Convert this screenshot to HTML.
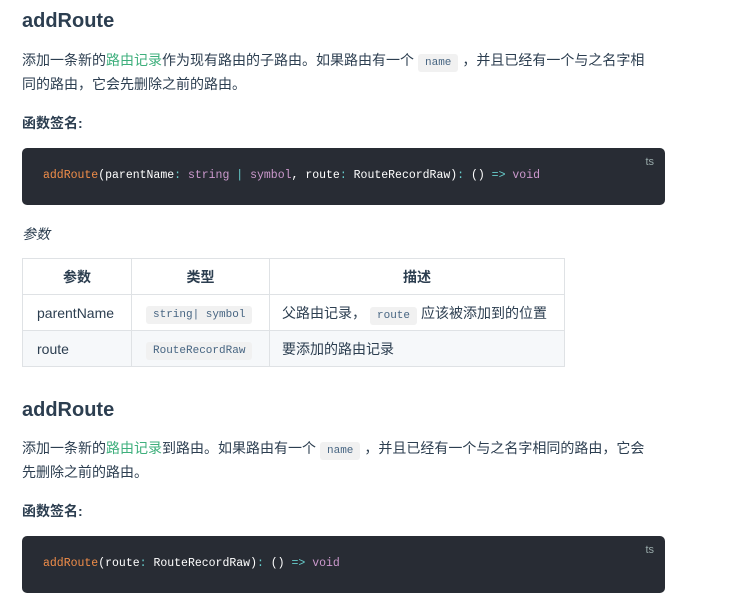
<!DOCTYPE html>
<html><head><meta charset="utf-8"><style>
body{margin:0;background:#fff;width:732px;height:606px;overflow:hidden;font-family:"Liberation Sans","Noto Sans CJK SC",sans-serif;color:#2c3e50;}
.a{position:absolute;left:22px;white-space:nowrap}
h2{margin:0;font-size:20px;font-weight:600;color:#2c3e50}
p{margin:0;font-size:14px;line-height:24px;color:#2c3e50}
.g{color:#3eaf7c}
.ic{font-family:"Liberation Mono",monospace;font-size:11px;background:#f1f1f1;color:#476582;padding:3px 7px;border-radius:3px;margin:0 4px}
.b{font-size:14px;font-weight:bold}
.code{position:absolute;left:22px;width:643px;height:57px;background:#282c34;border-radius:5px;font-family:"Liberation Mono",monospace;font-size:11.5px;color:#fff}
.code .t{position:absolute;left:21px;top:21px;white-space:pre}
.code .l{position:absolute;right:11px;top:8px;font-size:11px;color:#9aa;font-family:"Liberation Sans",sans-serif}
.o{color:#f08d49}.p{color:#cc99cd}.c{color:#67cdcc}
table{position:absolute;left:22px;top:258px;border-collapse:collapse;font-size:14px;color:#2c3e50;white-space:nowrap}
td,th{border:1px solid #dfe2e5;height:35px;padding:0 14px}
th{font-weight:bold;text-align:center}
tr.s{background:#f6f8fa}
</style></head><body>
<h2 class="a" style="top:10px">addRoute</h2>
<p class="a" style="top:48px">添加一条新的<span class="g">路由记录</span>作为现有路由的子路由。如果路由有一个<span class="ic">name</span>，并且已经有一个与之名字相</p>
<p class="a" style="top:72px">同的路由，它会先删除之前的路由。</p>
<div class="a b" style="top:113px">函数签名:</div>
<div class="code" style="top:148px"><span class="l">ts</span><div class="t"><span class="o">addRoute</span>(parentName<span class="c">:</span> <span class="p">string</span> <span class="c">|</span> <span class="p">symbol</span>, route<span class="c">:</span> RouteRecordRaw)<span class="c">:</span> () <span class="c">=&gt;</span> <span class="p">void</span></div></div>
<div class="a" style="top:224px;font-size:14px;font-style:italic">参数</div>
<table>
<tr><th style="width:80px">参数</th><th style="width:109px">类型</th><th style="width:266px">描述</th></tr>
<tr><td>parentName</td><td><span class="ic" style="margin:0">string| symbol</span></td><td style="padding:0 12px">父路由记录，<span class="ic">route</span>应该被添加到的位置</td></tr>
<tr class="s"><td>route</td><td><span class="ic" style="margin:0">RouteRecordRaw</span></td><td style="padding:0 12px">要添加的路由记录</td></tr>
</table>
<h2 class="a" style="top:399px">addRoute</h2>
<p class="a" style="top:436px">添加一条新的<span class="g">路由记录</span>到路由。如果路由有一个<span class="ic">name</span>，并且已经有一个与之名字相同的路由，它会</p>
<p class="a" style="top:460px">先删除之前的路由。</p>
<div class="a b" style="top:501px">函数签名:</div>
<div class="code" style="top:536px"><span class="l">ts</span><div class="t"><span class="o">addRoute</span>(route<span class="c">:</span> RouteRecordRaw)<span class="c">:</span> () <span class="c">=&gt;</span> <span class="p">void</span></div></div>
</body></html>
